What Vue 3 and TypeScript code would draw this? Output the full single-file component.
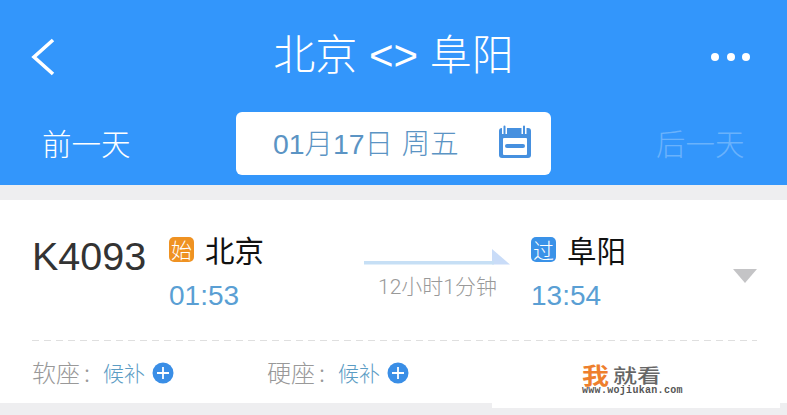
<script setup lang="ts">
const seats = [
  { name: '软座', state: '候补' },
  { name: '硬座', state: '候补' },
]
</script>

<template>
  <div class="page">
    <header class="head">
      <div class="title-row">
        <svg class="back" width="26" height="38" viewBox="0 0 26 38">
          <path d="M23 2 L4 19 L23 36" fill="none" stroke="#fff" stroke-width="3.6" />
        </svg>
        <div class="title">北京 &lt;&gt; 阜阳</div>
        <div class="dots"><i></i><i></i><i></i></div>
      </div>
      <div class="date-row">
        <span class="day">前一天</span>
        <div class="date-box">
          <span class="date">01月17日 周五</span>
          <svg class="cal" width="34" height="34" viewBox="0 0 34 34">
            <rect x="1" y="3" width="32" height="30" rx="3" fill="#4690df" />
            <rect x="5" y="13" width="24" height="17" rx="1" fill="#fff" />
            <path d="M6.5 1v8M26 1v8" stroke="#fff" stroke-width="5" />
            <path d="M6.5 1.5v7M26 1.5v7" stroke="#4690df" stroke-width="2" stroke-linecap="round" />
            <path d="M9 21h16" stroke="#4690df" stroke-width="4" stroke-linecap="round" />
          </svg>
        </div>
        <span class="day faded">后一天</span>
      </div>
    </header>

    <section class="card">
      <div class="train">
        <div class="code">K4093</div>
        <div class="stop">
          <div class="station"><span class="badge orange">始</span><span class="city">北京</span></div>
          <div class="time">01:53</div>
        </div>
        <div class="route">
          <svg class="arrow" width="146" height="16" viewBox="0 0 146 16">
            <path d="M128 0L146 15.5H128z" fill="#c9dcf8" />
            <rect x="0" y="12" width="130" height="3.5" fill="#c6dff5" />
          </svg>
          <div class="duration">12小时1分钟</div>
        </div>
        <div class="stop to">
          <div class="station"><span class="badge blue">过</span><span class="city">阜阳</span></div>
          <div class="time">13:54</div>
        </div>
        <svg class="caret" width="24" height="14" viewBox="0 0 24 14"><path d="M0 0h24L12 14z" fill="#c4c4c6" /></svg>
      </div>
      <div class="rule"></div>
      <div class="seats">
        <div v-for="s in seats" :key="s.name" class="seat">
          <span class="seat-name">{{ s.name }}<span class="colon">:</span></span>
          <span class="seat-state">{{ s.state }}</span>
          <svg class="plus" width="22" height="22" viewBox="0 0 22 22">
            <circle cx="11" cy="11" r="10.5" fill="#3a8ee6" />
            <path d="M11 5v12M5 11h12" stroke="#fff" stroke-width="1.8" />
          </svg>
        </div>
      </div>
      <div class="mark">
        <div class="mark-top"><span class="wo">我</span><span class="jk">就看</span></div>
        <div class="url">www.wojiukan.com</div>
      </div>
    </section>
  </div>
</template>

<style>
html, body { margin: 0; background: #eeeef0; }
</style>

<style scoped>
.page {
  width: 787px;
  height: 415px;
  overflow: hidden;
  background: #eeeef0;
  font-family: "Noto Sans CJK SC", "Liberation Sans", sans-serif;
}
.head {
  height: 185px;
  background: #3396fb;
  box-sizing: border-box;
  padding-top: 36px;
}
.title-row {
  height: 40px;
  display: flex;
  align-items: center;
  justify-content: space-between;
  padding: 0 37px 0 30px;
}
.back { flex: none; margin-top: 2px; }
.title {
  color: #fff;
  font-family: "Liberation Sans", "Noto Sans CJK SC", sans-serif;
  font-size: 42px;
  line-height: 40px;
  font-weight: 300;
  white-space: nowrap;
  margin-left: 20px;
}
.dots { display: flex; gap: 7.5px; margin-top: 2px; }
.dots i { width: 8px; height: 8px; border-radius: 50%; background: #fff; display: block; }
.date-row {
  display: flex;
  align-items: center;
  margin-top: 36px;
  height: 63px;
}
.day {
  color: #fff;
  font-size: 29.5px;
  font-weight: 300;
  width: 88px;
  white-space: nowrap;
  margin-left: 42px;
  padding-bottom: 4px;
}
.day.faded { color: #6ab2fb; margin-left: 105px; }
.date-box {
  width: 315px;
  height: 63px;
  margin-left: 106px;
  background: #fff;
  border-radius: 6px;
  display: flex;
  align-items: center;
  box-sizing: border-box;
  padding-left: 37px;
}
.date {
  color: #5b94c4;
  font-size: 28.4px;
  font-weight: 300;
  white-space: nowrap;
  word-spacing: 1px;
  padding-bottom: 4px;
  font-family: "Liberation Sans", "Noto Sans CJK SC", sans-serif;
}
.cal { margin-left: auto; margin-right: 19px; margin-bottom: 3px; }
.card {
  margin-top: 15px;
  height: 203px;
  background: #fff;
  box-sizing: border-box;
  padding: 0 30px 0 32px;
  position: relative;
}
.train {
  display: flex;
  height: 140px;
  position: relative;
}
.rule {
  height: 1px;
  background-image: repeating-linear-gradient(90deg, #dfdfdf 0 7px, transparent 7px 12px);
}
.code {
  color: #333;
  font-family: "Liberation Sans", sans-serif;
  font-size: 39.5px;
  line-height: 40px;
  margin-top: 36px;
  width: 137px;
  flex: none;
}
.stop { width: 195px; flex: none; padding-top: 30px; }
.station { display: flex; align-items: center; height: 38px; }
.badge {
  width: 25px;
  height: 25px;
  border-radius: 5px;
  color: #fff;
  font-size: 21px;
  line-height: 24px;
  text-align: center;
  margin-right: 11px;
  flex: none;
  font-weight: 300;
}
.orange { background: #ef9222; }
.blue { background: #3a92e8; }
.city { color: #111; font-size: 29.5px; font-weight: 400; line-height: 38px; white-space: nowrap; }
.time {
  color: #5a9fd4;
  font-family: "Liberation Sans", sans-serif;
  font-size: 28px;
  line-height: 32px;
  margin-top: 12px;
}
.route { width: 167px; flex: none; padding-top: 49px; }
.arrow { display: block; }
.duration {
  color: #999;
  font-size: 21px;
  line-height: 26px;
  margin-top: 9px;
  margin-left: 14px;
  white-space: nowrap;
  font-weight: 300;
  font-family: Roboto, "Noto Sans CJK SC", sans-serif;
}
.to { width: 190px; }
.caret { position: absolute; right: 0; top: 69px; }
.seats { display: flex; padding-top: 18px; }
.seat { width: 235px; display: flex; align-items: center; height: 28px; }
.seat-name { color: #999; font-size: 24px; font-weight: 300; width: 71px; white-space: nowrap; padding-bottom: 3px; }
.colon { margin-left: 4px; }
.seat-state { color: #5b9cc4; font-size: 21px; font-weight: 300; margin-right: 7px; white-space: nowrap; padding-bottom: 3px; }
.mark {
  position: absolute;
  left: 492px;
  top: 145px;
  width: 288px;
  height: 63px;
  background: #fff;
  box-sizing: border-box;
  padding: 19px 0 0 90px;
}
.mark-top { display: flex; align-items: center; height: 22px; }
.wo { color: #ee7f2d; font-size: 27px; line-height: 22px; font-weight: 700; transform: scaleY(0.85); }
.jk { color: #666; font-size: 24px; line-height: 22px; font-weight: 500; margin-left: 4px; transform: scaleY(0.8); }
.url {
  color: #555;
  font-family: "Liberation Mono", monospace;
  font-size: 10px;
  line-height: 10px;
  font-weight: 700;
  white-space: nowrap;
  letter-spacing: 0.3px;
}
</style>
